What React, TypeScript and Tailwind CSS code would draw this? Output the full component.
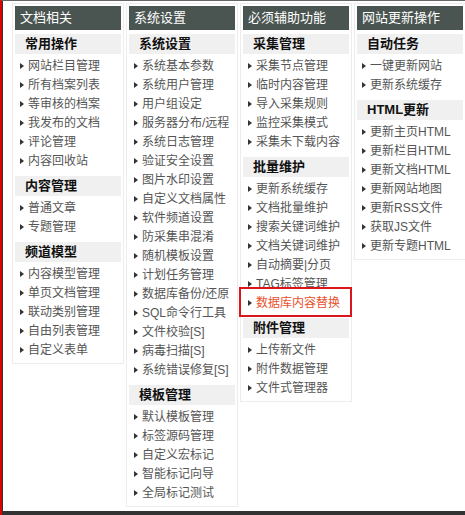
import React from "react";

type Section = { title: string; items: string[]; hot?: string };
type Column = { title: string; sections: Section[] };

const COLUMNS: Column[] = [
  {
    title: "文档相关",
    sections: [
      { title: "常用操作", items: ["网站栏目管理", "所有档案列表", "等审核的档案", "我发布的文档", "评论管理", "内容回收站"] },
      { title: "内容管理", items: ["普通文章", "专题管理"] },
      { title: "频道模型", items: ["内容模型管理", "单页文档管理", "联动类别管理", "自由列表管理", "自定义表单"] },
    ],
  },
  {
    title: "系统设置",
    sections: [
      {
        title: "系统设置",
        items: [
          "系统基本参数", "系统用户管理", "用户组设定", "服务器分布/远程", "系统日志管理", "验证安全设置",
          "图片水印设置", "自定义文档属性", "软件频道设置", "防采集串混淆", "随机模板设置", "计划任务管理",
          "数据库备份/还原", "SQL命令行工具", "文件校验[S]", "病毒扫描[S]", "系统错误修复[S]",
        ],
      },
      { title: "模板管理", items: ["默认模板管理", "标签源码管理", "自定义宏标记", "智能标记向导", "全局标记测试"] },
    ],
  },
  {
    title: "必须辅助功能",
    sections: [
      { title: "采集管理", items: ["采集节点管理", "临时内容管理", "导入采集规则", "监控采集模式", "采集未下载内容"] },
      {
        title: "批量维护",
        items: ["更新系统缓存", "文档批量维护", "搜索关键词维护", "文档关键词维护", "自动摘要|分页", "TAG标签管理", "数据库内容替换"],
        hot: "数据库内容替换",
      },
      { title: "附件管理", items: ["上传新文件", "附件数据管理", "文件式管理器"] },
    ],
  },
  {
    title: "网站更新操作",
    sections: [
      { title: "自动任务", items: ["一键更新网站", "更新系统缓存"] },
      { title: "HTML更新", items: ["更新主页HTML", "更新栏目HTML", "更新文档HTML", "更新网站地图", "更新RSS文件", "获取JS文件", "更新专题HTML"] },
    ],
  },
];

function Item({ label, hot }: { label: string; hot?: boolean }) {
  return (
    <li className="relative flex h-[19px] items-center pl-[5px]">
      <span className="mr-[4px] h-0 w-0 border-y-[3px] border-l-[4px] border-y-transparent border-l-[#333]" />
      <span className={hot ? "text-[#e8502a]" : "text-[#555]"}>{label}</span>
      {hot && <span className="pointer-events-none absolute -left-[4px] -right-[3px] -top-[6px] -bottom-[5px] border-2 border-[#d9161c]" />}
    </li>
  );
}

export default function App() {
  return (
    <div
      className="h-[515px] w-[465px] overflow-hidden border-l-2 border-t border-l-[#e00000] border-t-[#666] bg-white"
      style={{ fontFamily: '"Liberation Sans", "Noto Sans CJK SC", sans-serif' }}
    >
      <div className="flex h-[510px] items-start gap-[2px] border-l border-l-[#333] pl-[9px] pt-[2px]">
        {COLUMNS.map((col) => (
          <div key={col.title} className="w-[112px] shrink-0 border border-[#ececec] px-[2px] pt-[2px] pb-[4px]">
            <div className="flex h-[24px] items-center bg-[#4a5551] pl-[5px] text-[13px] text-white">{col.title}</div>
            {col.sections.map((sec, i) => (
              <div key={sec.title}>
                <div className={(i === 0 ? "mt-[4px]" : "mt-[6px]") + " flex h-[20px] items-center bg-[#f0f0f0] pl-[10px] text-[13px] font-bold text-[#111]"}>
                  {sec.title}
                </div>
                <ul className="pt-[2px] text-[12px]">
                  {sec.items.map((it) => (
                    <Item key={it} label={it} hot={sec.hot === it} />
                  ))}
                </ul>
              </div>
            ))}
          </div>
        ))}
      </div>
      <div className="h-[4px] bg-[#333]" />
    </div>
  );
}
